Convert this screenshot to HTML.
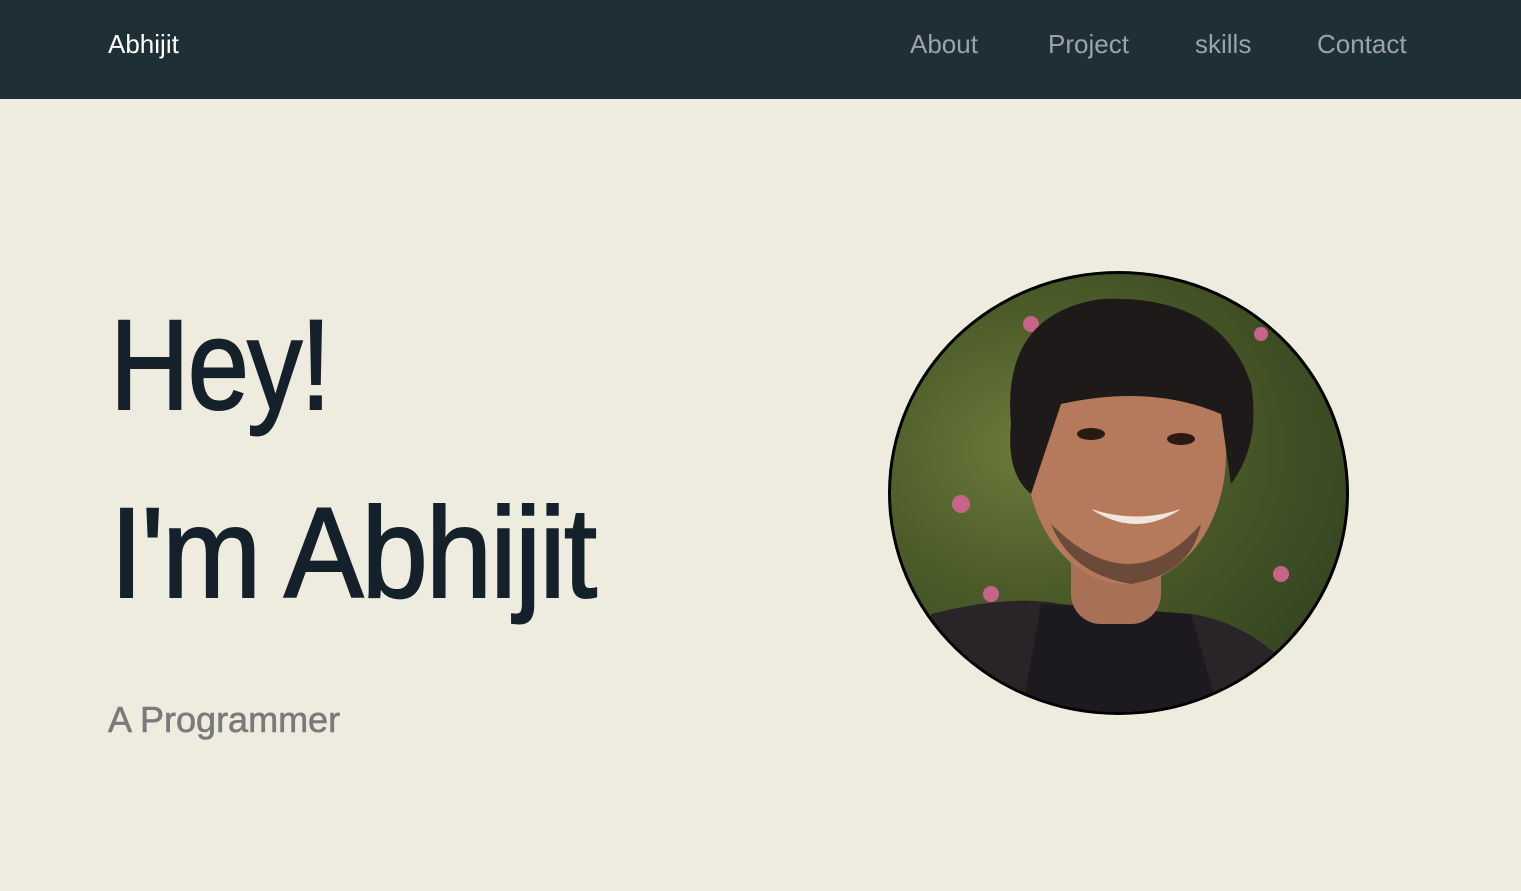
<!DOCTYPE html>
<html><head><meta charset="utf-8"><style>
*{margin:0;padding:0;box-sizing:border-box}
body{width:1521px;height:891px;background:#eeecde;font-family:"Liberation Sans",sans-serif;position:relative;overflow:hidden}
nav{position:absolute;left:0;top:0;width:1521px;height:99px;background:#1f2f38}
nav span{position:absolute;top:29px;font-size:26px;line-height:30px;color:#9ca3a6;white-space:nowrap}
.brand{color:#fff!important}
.h{position:absolute;left:110px;font-size:128px;color:#14212b;line-height:1;transform-origin:left;white-space:nowrap;letter-spacing:-2px;-webkit-text-stroke:2px #14212b}
.sub{position:absolute;left:108px;top:699px;font-size:36px;color:#7a7a7a;white-space:nowrap;-webkit-text-stroke:0.6px #7a7a7a}
.pic{position:absolute;left:888px;top:271px;width:461px;height:444px;border-radius:50%;border:3px solid #000;overflow:hidden;
background:radial-gradient(ellipse at 30% 40%,#6b7a3a 0%,#4a5a28 40%,#3a4a22 70%,#2e3b1e 100%)}
</style></head><body>
<nav>
<span class="brand" style="left:108px">Abhijit</span>
<span style="left:910px">About</span>
<span style="left:1048px">Project</span>
<span style="left:1195px">skills</span>
<span style="left:1317px">Contact</span>
</nav>
<div class="h" style="top:302px;transform:scaleX(0.86)">Hey!</div>
<div class="h" style="top:490px;transform:scaleX(0.93)">I'm Abhijit</div>
<div class="sub">A Programmer</div>
<div class="pic">
<svg width="461" height="444" viewBox="0 0 461 444">
<circle cx="140" cy="50" r="8" fill="#c8648a"/><circle cx="70" cy="230" r="9" fill="#c8648a"/><circle cx="100" cy="320" r="8" fill="#c8648a"/><circle cx="390" cy="300" r="8" fill="#c8648a"/><circle cx="370" cy="60" r="7" fill="#c8648a"/>
<path d="M40 340 Q120 320 170 330 L300 340 Q370 350 420 420 L420 444 L40 444 Z" fill="#2a2428"/>
<path d="M150 330 L130 444 L330 444 L300 340 Z" fill="#1c1a1e"/>
<rect x="180" y="240" width="90" height="110" rx="30" fill="#a87055"/>
<ellipse cx="235" cy="180" rx="100" ry="130" fill="#b57a5c"/>
<path d="M120 150 Q110 40 210 25 Q330 20 360 110 Q370 170 340 210 L330 140 Q260 110 170 130 L140 220 Q115 200 120 150Z" fill="#1f1a1a"/>
<ellipse cx="200" cy="160" rx="14" ry="6" fill="#2a1a14"/><ellipse cx="290" cy="165" rx="14" ry="6" fill="#2a1a14"/>
<path d="M200 235 Q245 265 290 235 Q245 250 200 235Z" fill="#f0e6dc"/>
<path d="M160 250 Q240 330 310 250 Q300 300 240 310 Q180 300 160 250Z" fill="#3a2a22" opacity=".6"/>
</svg>
</div>
</body></html>
